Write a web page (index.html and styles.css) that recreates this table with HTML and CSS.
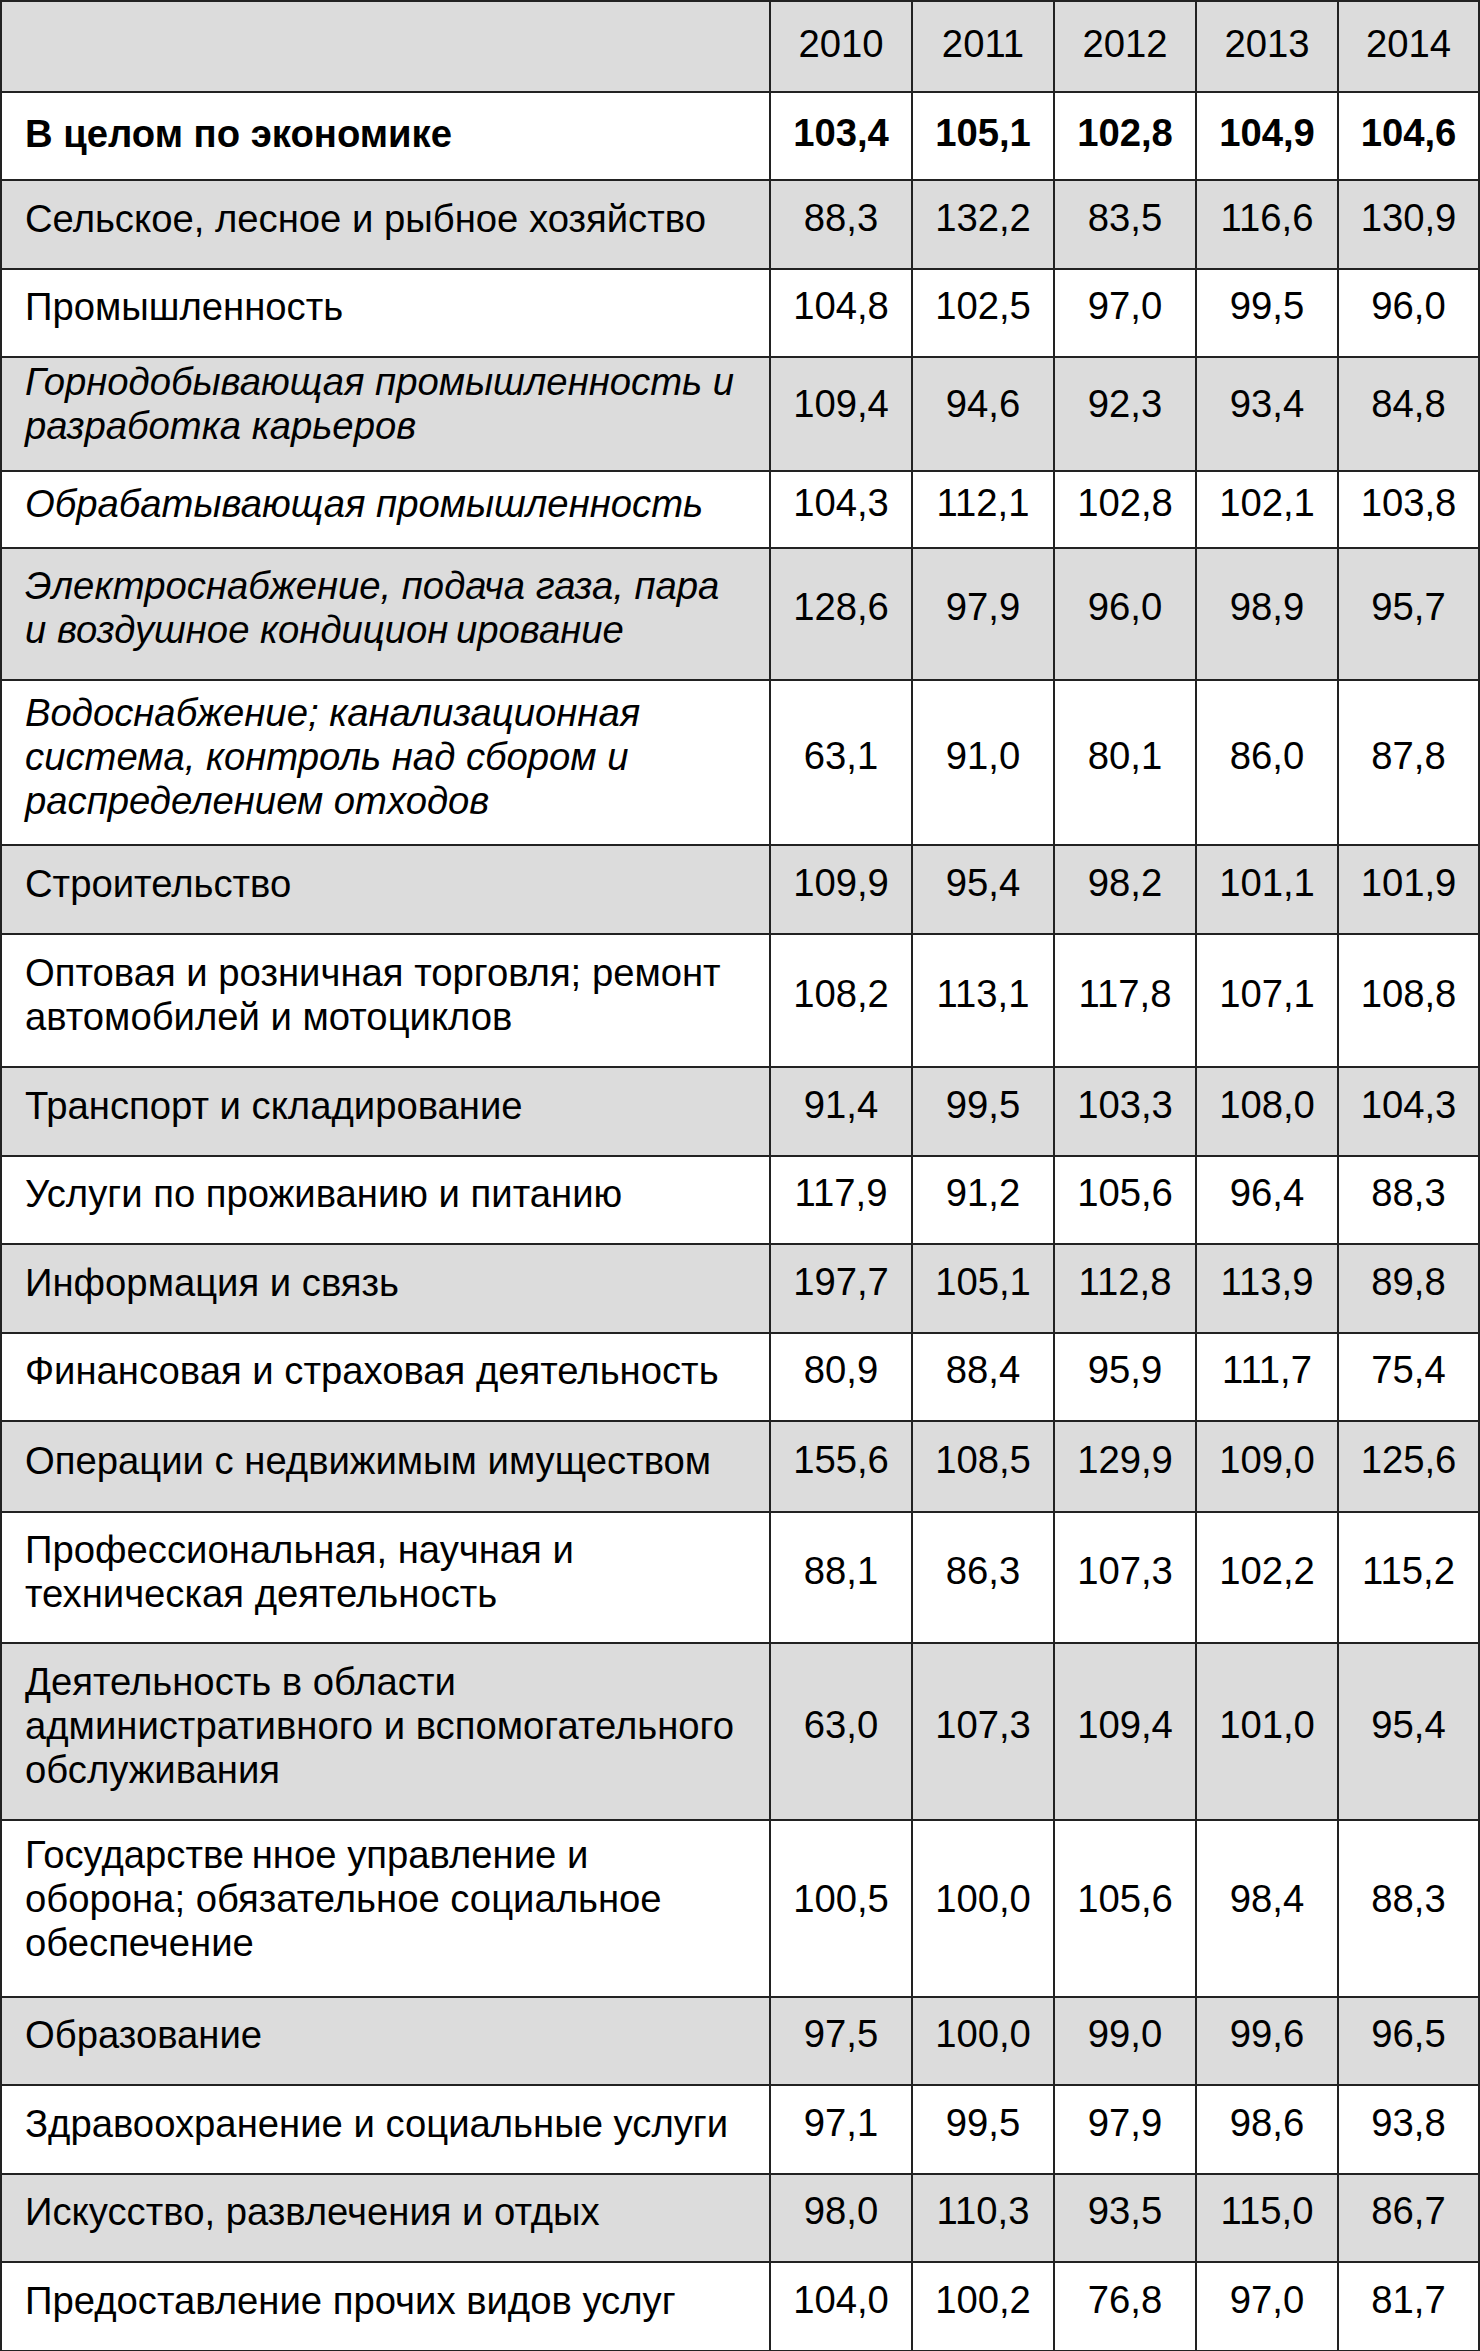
FILE: index.html
```html
<!DOCTYPE html>
<html lang="ru">
<head>
<meta charset="utf-8">
<title>Индексы</title>
<link rel="stylesheet" href="styles.css">
</head>
<body>
<div class="table">
  <div class="row shade head"><div class="cell label"></div><div class="cell num">2010</div><div class="cell num">2011</div><div class="cell num">2012</div><div class="cell num">2013</div><div class="cell num">2014</div></div>
  <div class="row bold"><div class="cell label">В целом по экономике</div><div class="cell num">103,4</div><div class="cell num">105,1</div><div class="cell num">102,8</div><div class="cell num">104,9</div><div class="cell num">104,6</div></div>
  <div class="row shade"><div class="cell label">Сельское, лесное и рыбное хозяйство</div><div class="cell num">88,3</div><div class="cell num">132,2</div><div class="cell num">83,5</div><div class="cell num">116,6</div><div class="cell num">130,9</div></div>
  <div class="row"><div class="cell label">Промышленность</div><div class="cell num">104,8</div><div class="cell num">102,5</div><div class="cell num">97,0</div><div class="cell num">99,5</div><div class="cell num">96,0</div></div>
  <div class="row shade sub lift"><div class="cell label">Горнодобывающая промышленность и разработка карьеров</div><div class="cell num">109,4</div><div class="cell num">94,6</div><div class="cell num">92,3</div><div class="cell num">93,4</div><div class="cell num">84,8</div></div>
  <div class="row sub"><div class="cell label">Обрабатывающая промышленность</div><div class="cell num">104,3</div><div class="cell num">112,1</div><div class="cell num">102,8</div><div class="cell num">102,1</div><div class="cell num">103,8</div></div>
  <div class="row shade sub"><div class="cell label">Электроснабжение, подача газа, пара и воздушное кондицион&#8201;ирование</div><div class="cell num">128,6</div><div class="cell num">97,9</div><div class="cell num">96,0</div><div class="cell num">98,9</div><div class="cell num">95,7</div></div>
  <div class="row sub"><div class="cell label">Водоснабжение; канализационная система, контроль над сбором и распределением отходов</div><div class="cell num">63,1</div><div class="cell num">91,0</div><div class="cell num">80,1</div><div class="cell num">86,0</div><div class="cell num">87,8</div></div>
  <div class="row shade"><div class="cell label">Строительство</div><div class="cell num">109,9</div><div class="cell num">95,4</div><div class="cell num">98,2</div><div class="cell num">101,1</div><div class="cell num">101,9</div></div>
  <div class="row"><div class="cell label">Оптовая и розничная торговля; ремонт автомобилей и мотоциклов</div><div class="cell num">108,2</div><div class="cell num">113,1</div><div class="cell num">117,8</div><div class="cell num">107,1</div><div class="cell num">108,8</div></div>
  <div class="row shade"><div class="cell label">Транспорт и складирование</div><div class="cell num">91,4</div><div class="cell num">99,5</div><div class="cell num">103,3</div><div class="cell num">108,0</div><div class="cell num">104,3</div></div>
  <div class="row"><div class="cell label">Услуги по проживанию и питанию</div><div class="cell num">117,9</div><div class="cell num">91,2</div><div class="cell num">105,6</div><div class="cell num">96,4</div><div class="cell num">88,3</div></div>
  <div class="row shade"><div class="cell label">Информация и связь</div><div class="cell num">197,7</div><div class="cell num">105,1</div><div class="cell num">112,8</div><div class="cell num">113,9</div><div class="cell num">89,8</div></div>
  <div class="row"><div class="cell label">Финансовая и страховая деятельность</div><div class="cell num">80,9</div><div class="cell num">88,4</div><div class="cell num">95,9</div><div class="cell num">111,7</div><div class="cell num">75,4</div></div>
  <div class="row shade"><div class="cell label">Операции с недвижимым имуществом</div><div class="cell num">155,6</div><div class="cell num">108,5</div><div class="cell num">129,9</div><div class="cell num">109,0</div><div class="cell num">125,6</div></div>
  <div class="row"><div class="cell label">Профессиональная, научная и техническая деятельность</div><div class="cell num">88,1</div><div class="cell num">86,3</div><div class="cell num">107,3</div><div class="cell num">102,2</div><div class="cell num">115,2</div></div>
  <div class="row shade"><div class="cell label">Деятельность в области административного и вспомогательного обслуживания</div><div class="cell num">63,0</div><div class="cell num">107,3</div><div class="cell num">109,4</div><div class="cell num">101,0</div><div class="cell num">95,4</div></div>
  <div class="row lift"><div class="cell label">Государстве&#8201;нное управление и оборона; обязательное социальное обеспечение</div><div class="cell num">100,5</div><div class="cell num">100,0</div><div class="cell num">105,6</div><div class="cell num">98,4</div><div class="cell num">88,3</div></div>
  <div class="row shade"><div class="cell label">Образование</div><div class="cell num">97,5</div><div class="cell num">100,0</div><div class="cell num">99,0</div><div class="cell num">99,6</div><div class="cell num">96,5</div></div>
  <div class="row"><div class="cell label">Здравоохранение и социальные услуги</div><div class="cell num">97,1</div><div class="cell num">99,5</div><div class="cell num">97,9</div><div class="cell num">98,6</div><div class="cell num">93,8</div></div>
  <div class="row shade"><div class="cell label">Искусство, развлечения и отдых</div><div class="cell num">98,0</div><div class="cell num">110,3</div><div class="cell num">93,5</div><div class="cell num">115,0</div><div class="cell num">86,7</div></div>
  <div class="row"><div class="cell label">Предоставление прочих видов услуг</div><div class="cell num">104,0</div><div class="cell num">100,2</div><div class="cell num">76,8</div><div class="cell num">97,0</div><div class="cell num">81,7</div></div>
</div>
</body>
</html>
```

FILE: styles.css
```css
html, body {
  margin: 0;
  padding: 0;
  background: #ffffff;
}

body {
  font-family: "Liberation Sans", Arial, sans-serif;
  font-size: 38.25px;
  line-height: 44px;
  color: #000000;
}

.table {
  display: grid;
  width: 1480px;
  box-sizing: border-box;
  grid-template-columns: 769px 142px 142px 142px 142px 141px;
  grid-template-rows: 91px 88px 89px 88px 114px 77px 132px 165px 89px 133px 89px 88px 89px 88px 91px 131px 177px 177px 88px 89px 88px 89px;
  border-top: 2px solid #222222;
  border-left: 2px solid #222222;
}

.row {
  display: contents;
}

.cell {
  display: flex;
  align-items: center;
  box-sizing: border-box;
  padding-bottom: 12px;
  border-right: 2px solid #222222;
  border-bottom: 2px solid #222222;
  background: #ffffff;
}

.row.shade .cell {
  background: #dcdcdc;
}

.label {
  padding-left: 23px;
  padding-right: 30px;
}

.num {
  justify-content: center;
  padding-bottom: 14px;
}

.row.lift .cell {
  padding-bottom: 20px;
}

.row.head .cell {
  padding-bottom: 5px;
}

.row.bold .cell {
  font-weight: bold;
  padding-bottom: 4px;
}

.row.bold .num {
  padding-bottom: 6px;
}

.row.sub .label {
  font-style: italic;
}
```
